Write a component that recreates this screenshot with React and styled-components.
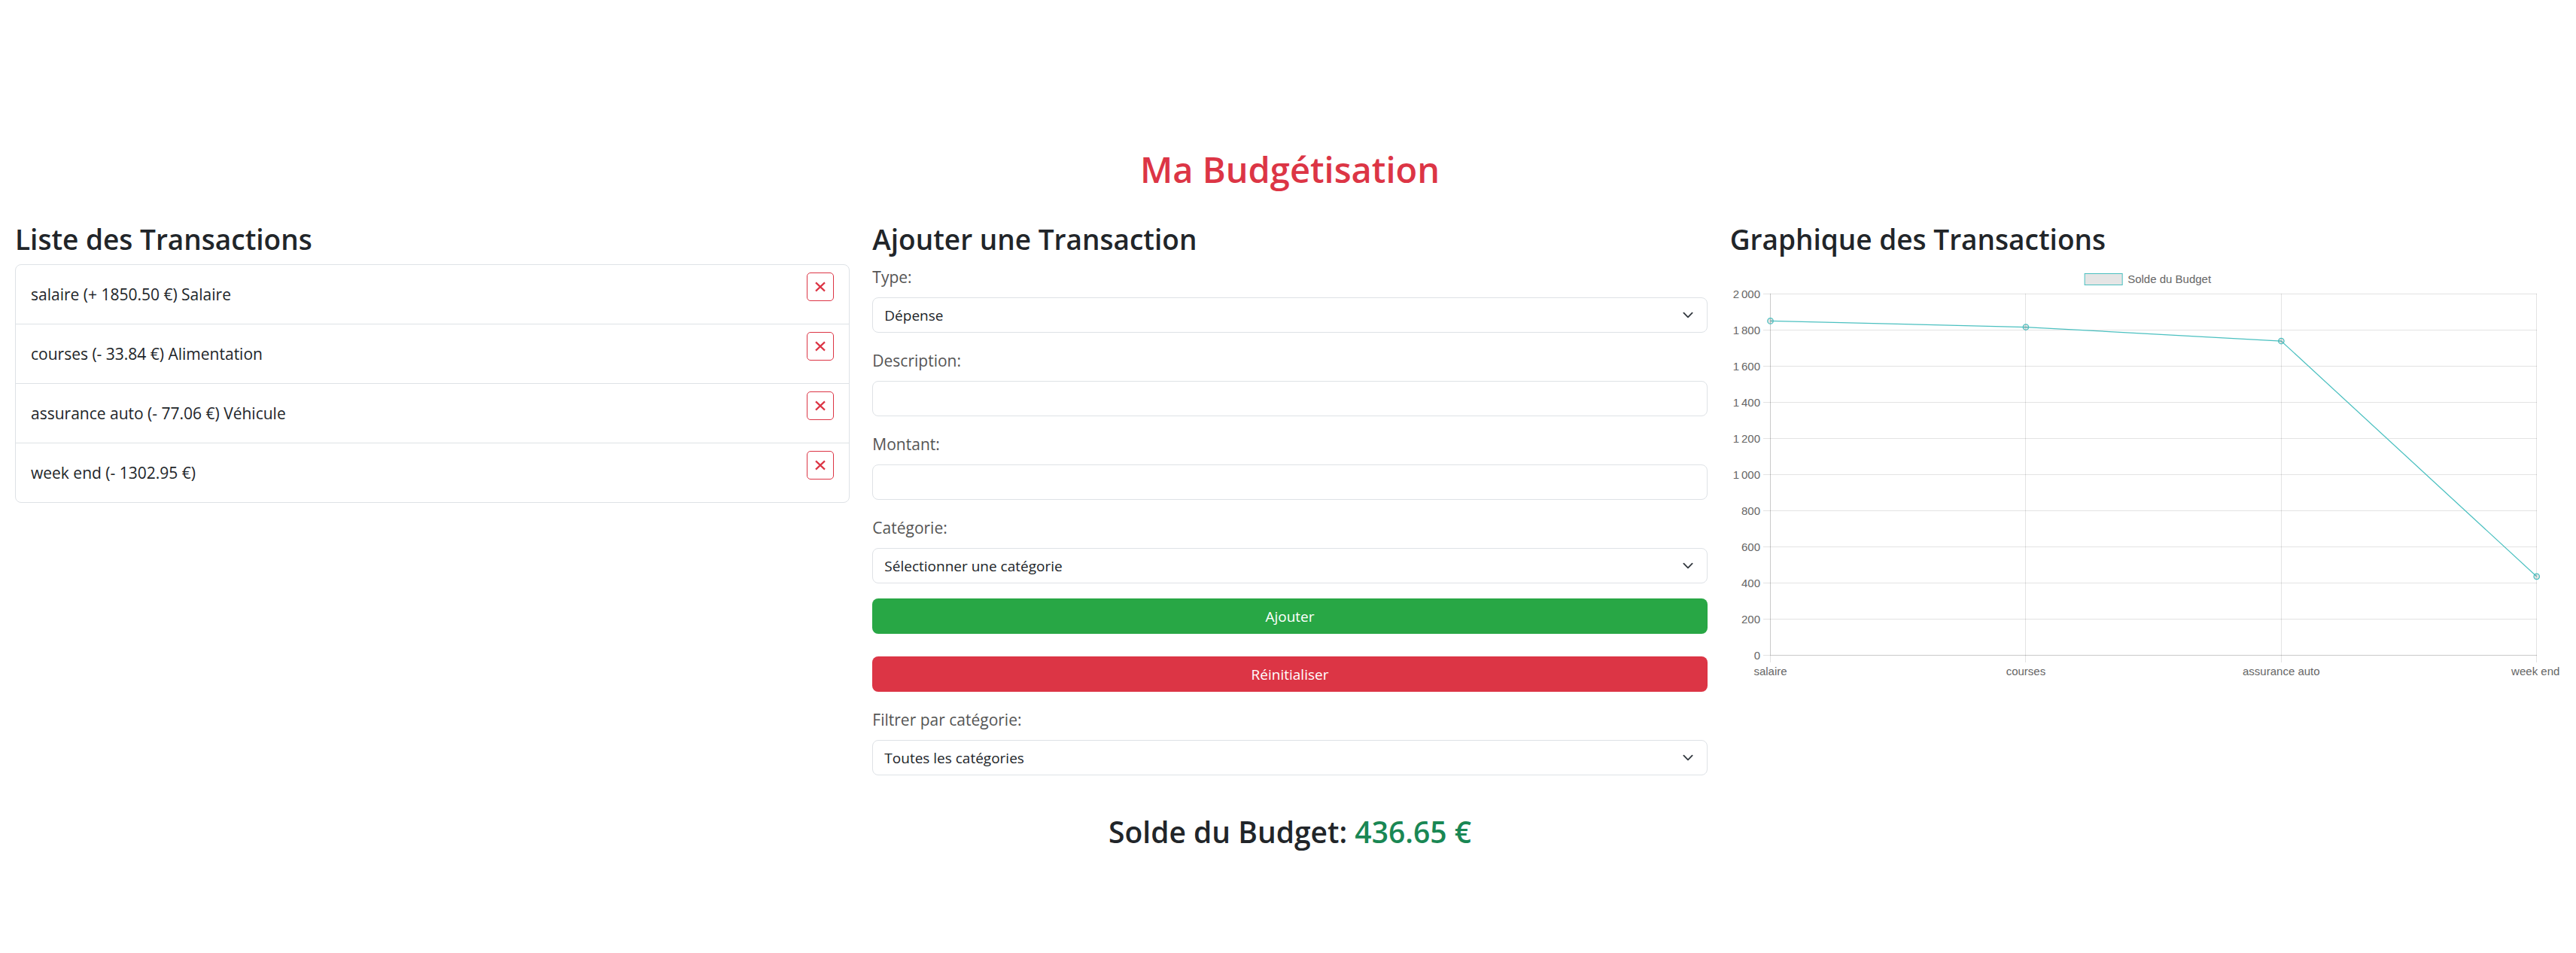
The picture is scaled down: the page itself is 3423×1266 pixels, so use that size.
import React from "react";
import styled, { createGlobalStyle } from "styled-components";

const GlobalStyle = createGlobalStyle`
  *, *::before, *::after { box-sizing: border-box; }
  body {
    margin: 0;
    background: #fff;
    color: #212529;
    font-family: "Segoe UI", "Open Sans", "Noto Sans", sans-serif;
    font-size: 21px;
    line-height: 34px;
  }
`;

const chevron =
  "url(\"data:image/svg+xml,%3csvg xmlns='http://www.w3.org/2000/svg' viewBox='0 0 16 16'%3e%3cpath fill='none' stroke='%23343a40' stroke-linecap='round' stroke-linejoin='round' stroke-width='2' d='m2 5 6 6 6-6'/%3e%3c/svg%3e\")";

const Page = styled.main`
  min-height: 100vh;
  padding: 195px 15px 40px 20px;
`;

const Title = styled.h1`
  margin: 0 0 39px;
  color: #dc3545;
  font-size: 47px;
  font-weight: 600;
  line-height: 60px;
  text-align: center;
`;

const Columns = styled.div`
  display: grid;
  grid-template-columns: repeat(3, minmax(0, 1fr));
  gap: 30px;
  align-items: start;
`;

const Heading = styled.h2`
  margin: 0 0 9px;
  font-size: 37px;
  font-weight: 600;
  line-height: 48px;
`;

const List = styled.ul`
  margin: 0;
  padding: 0;
  list-style: none;
  border: 1px solid #dee2e6;
  border-radius: 8px;
`;

const Item = styled.li`
  display: flex;
  align-items: center;
  justify-content: space-between;
  padding: 10px 20px;
  & + & {
    border-top: 1px solid #dee2e6;
  }
`;

const DeleteButton = styled.button`
  display: flex;
  align-items: center;
  justify-content: center;
  width: 36px;
  height: 38px;
  margin: 0 0 20px;
  padding: 0;
  border: 1px solid #dc3545;
  border-radius: 5px;
  background: transparent;
  color: #dc3545;
  cursor: pointer;
`;

const Form = styled.form`
  display: flex;
  flex-direction: column;
  gap: 20px;
`;

const Field = styled.div`
  display: flex;
  flex-direction: column;
  gap: 10px;
`;

const Label = styled.label`
  color: #555;
`;

const Input = styled.input`
  width: 100%;
  height: 47px;
  padding: 0 15px;
  border: 1px solid #dee2e6;
  border-radius: 8px;
  background: #fff;
  color: #212529;
  font: inherit;
  font-size: 19px;
`;

const Select = styled(Input).attrs({ as: "select" })`
  appearance: none;
  background: #fff ${chevron} no-repeat right 15px center / 20px 15px;
`;

const Actions = styled.div`
  display: flex;
  flex-direction: column;
  gap: 30px;
`;

const Button = styled.button`
  height: 47px;
  border: 0;
  border-radius: 8px;
  background: ${(p) => p.$color};
  color: #fff;
  font: inherit;
  font-size: 19px;
  cursor: pointer;
`;

const Balance = styled(Heading)`
  margin: 51px 0 0;
  font-size: 39px;
  text-align: center;
`;

const Amount = styled.span`
  color: #198754;
`;

const Chart = styled.svg`
  display: block;
  width: 100%;
  height: auto;
  overflow: visible;
  font-family: "Liberation Sans", Arial, sans-serif;
  font-size: 15px;
  fill: #666;
`;

const transactions = [
  { name: "salaire", text: "salaire (+ 1850.50 €) Salaire", balance: 1850.5 },
  { name: "courses", text: "courses (- 33.84 €) Alimentation", balance: 1816.66 },
  { name: "assurance auto", text: "assurance auto (- 77.06 €) Véhicule", balance: 1739.6 },
  { name: "week end", text: "week end (- 1302.95 €)", balance: 436.65 },
];

const ticks = [0, 200, 400, 600, 800, 1000, 1200, 1400, 1600, 1800, 2000];
const formatTick = (v) =>
  v < 1000 ? String(v) : `${Math.floor(v / 1000)}\u202f${String(v % 1000).padStart(3, "0")}`;
const yOf = (v) => 519.5 - v * 0.24;
const xOf = (i) => 53.5 + i * 339.3;

function BudgetChart() {
  const line = transactions.map((t, i) => `${xOf(i)},${yOf(t.balance)}`).join(" ");
  const last = transactions.length - 1;
  return (
    <Chart viewBox="0 0 1109 555" role="img" aria-label="Solde du Budget">
      <rect x="471" y="12.5" width="50" height="15" fill="rgba(0,0,0,0.1)" stroke="#4bc0c0" />
      <text x="528" y="25">Solde du Budget</text>
      <g stroke="#000" strokeOpacity="0.11" shapeRendering="crispEdges">
        {ticks.map((v) => (
          <line key={v} x1="44" x2="1072" y1={yOf(v)} y2={yOf(v)} />
        ))}
        {transactions.map((t, i) => (
          <line key={t.name} x1={xOf(i)} x2={xOf(i)} y1="39" y2="529" />
        ))}
        <line x1={xOf(0)} x2={xOf(0)} y1="39" y2="520" />
        <line x1={xOf(0)} x2="1072" y1={yOf(0)} y2={yOf(0)} />
      </g>
      {ticks.map((v) => (
        <text key={v} x="40" y={yOf(v) + 5} textAnchor="end">{formatTick(v)}</text>
      ))}
      {transactions.map((t, i) => (
        <text
          key={t.name}
          x={i === last ? 1102 : xOf(i)}
          y="546"
          textAnchor={i === last ? "end" : "middle"}
        >
          {t.name}
        </text>
      ))}
      <polyline points={line} fill="none" stroke="#4bc0c0" strokeWidth="1.25" />
      {transactions.map((t, i) => (
        <circle key={t.name} cx={xOf(i)} cy={yOf(t.balance)} r="3.75" fill="rgba(0,0,0,0.1)" stroke="#4bc0c0" strokeWidth="1.25" />
      ))}
    </Chart>
  );
}

export default function App() {
  return (
    <>
      <GlobalStyle />
      <Page>
        <Title>Ma Budgétisation</Title>
        <Columns>
          <section>
            <Heading>Liste des Transactions</Heading>
            <List>
              {transactions.map((t) => (
                <Item key={t.name}>
                  <span>{t.text}</span>
                  <DeleteButton type="button" aria-label={`Supprimer ${t.name}`}>
                    <svg width="14" height="14" viewBox="0 0 14 14" aria-hidden="true">
                      <path d="M1 1.4 13 12.6M13 1.4 1 12.6" stroke="currentColor" strokeWidth="2.2" />
                    </svg>
                  </DeleteButton>
                </Item>
              ))}
            </List>
          </section>
          <section>
            <Heading>Ajouter une Transaction</Heading>
            <Form onSubmit={(e) => e.preventDefault()}>
              <Field>
                <Label htmlFor="type">Type:</Label>
                <Select id="type">
                  <option>Dépense</option>
                  <option>Revenu</option>
                </Select>
              </Field>
              <Field>
                <Label htmlFor="description">Description:</Label>
                <Input id="description" type="text" />
              </Field>
              <Field>
                <Label htmlFor="montant">Montant:</Label>
                <Input id="montant" type="text" inputMode="decimal" />
              </Field>
              <Field>
                <Label htmlFor="categorie">Catégorie:</Label>
                <Select id="categorie">
                  <option>Sélectionner une catégorie</option>
                </Select>
              </Field>
              <Actions>
                <Button type="submit" $color="#28a745">Ajouter</Button>
                <Button type="reset" $color="#dc3545">Réinitialiser</Button>
              </Actions>
              <Field>
                <Label htmlFor="filtre">Filtrer par catégorie:</Label>
                <Select id="filtre">
                  <option>Toutes les catégories</option>
                </Select>
              </Field>
            </Form>
          </section>
          <section>
            <Heading>Graphique des Transactions</Heading>
            <BudgetChart />
          </section>
        </Columns>
        <Balance>
          Solde du Budget: <Amount>436.65 €</Amount>
        </Balance>
      </Page>
    </>
  );
}
